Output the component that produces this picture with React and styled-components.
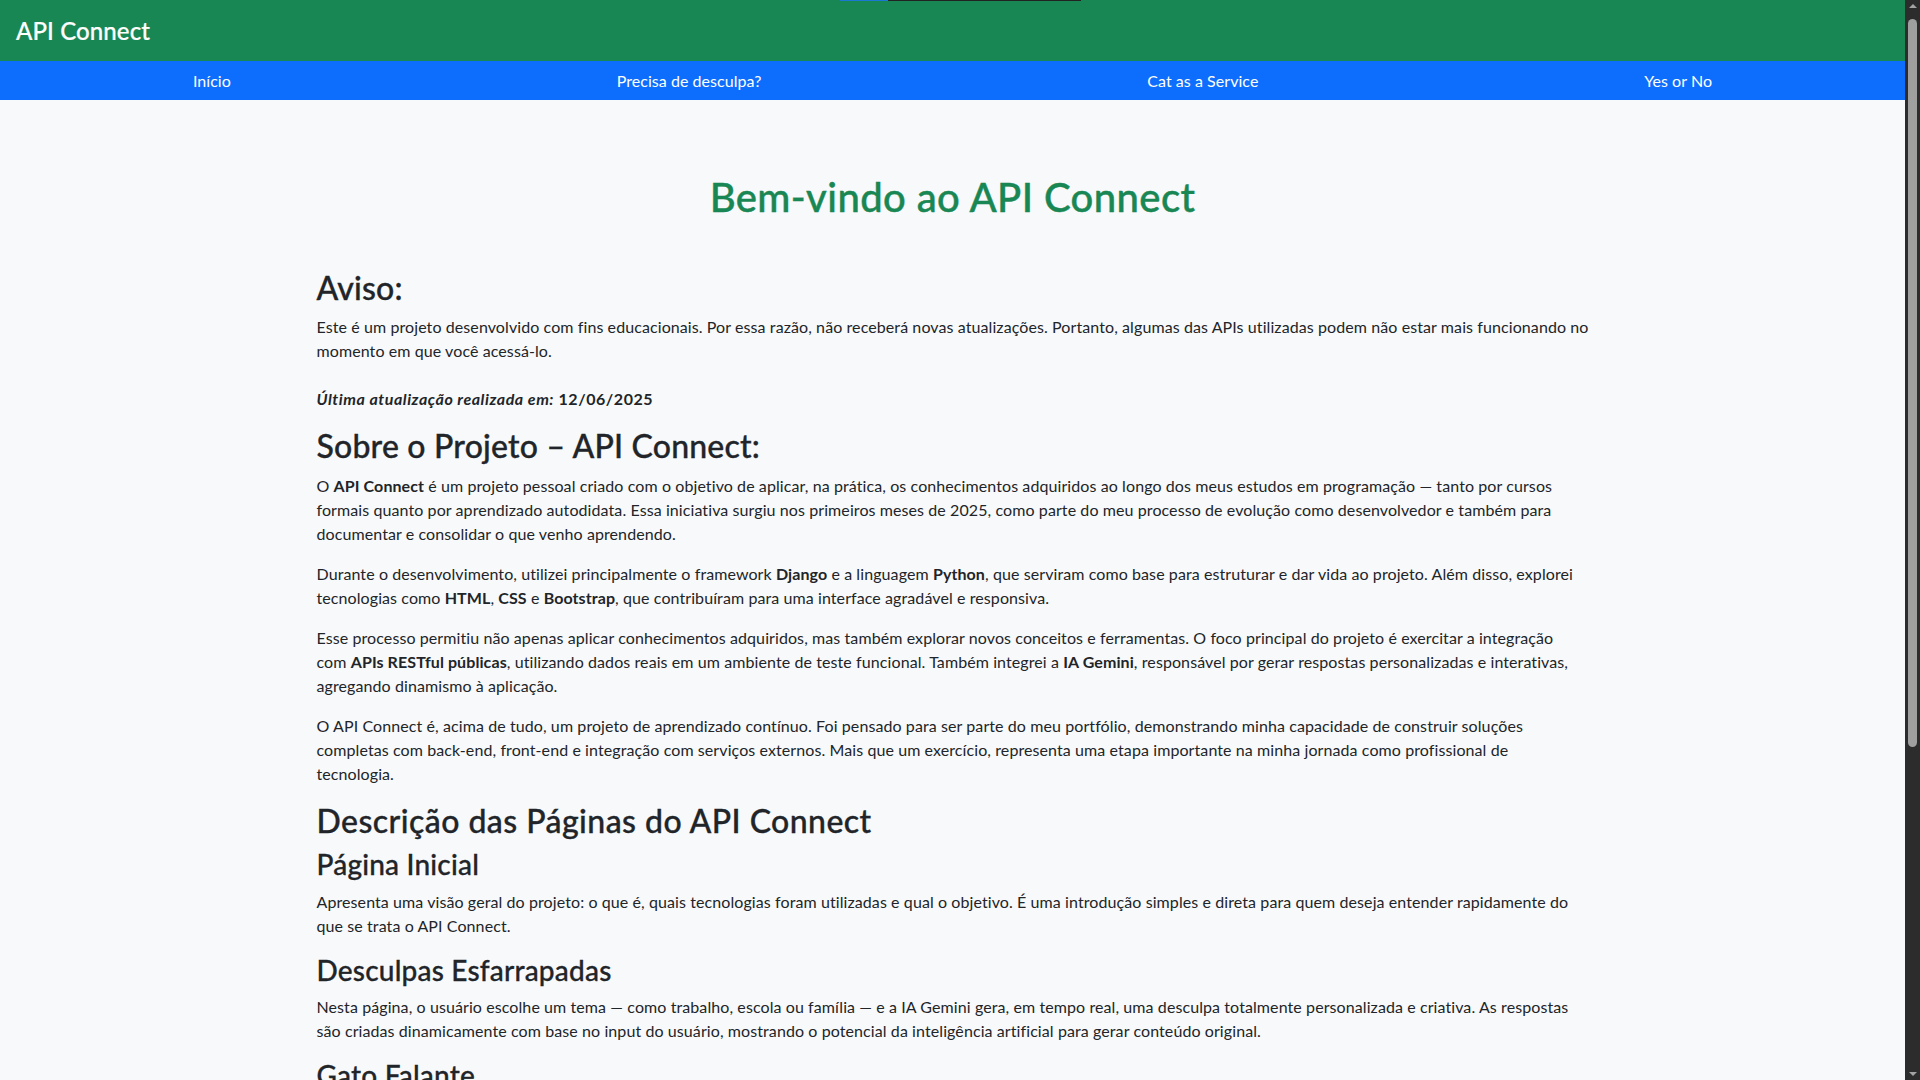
import React from "react";
import styled, { createGlobalStyle } from "styled-components";

const GlobalStyle = createGlobalStyle`
  *, *::before, *::after { box-sizing: border-box; }
  html, body { margin: 0; padding: 0; }
  body {
    font-family: Lato, "Noto Sans", "Liberation Sans", sans-serif;
    font-size: 16px;
    line-height: 1.5;
    color: #212529;
    background: #f8f9fa;
    overflow: hidden;
  }
`;

const Screen = styled.div`
  display: flex;
  height: 100vh;
  overflow: hidden;
`;

const Page = styled.div`
  flex: 1;
  min-width: 0;
  height: 100%;
  overflow: hidden;
  background: #f8f9fa;
`;

/* window scrollbar of the browser */
const ScrollBar = styled.aside`
  width: 15px;
  flex-shrink: 0;
  background: #2c2c2c;
  display: flex;
  flex-direction: column;
  align-items: center;
`;

const Arrow = styled.div`
  height: 17px;
  width: 15px;
  display: flex;
  align-items: ${(p) => (p.$down ? "flex-end" : "flex-start")};
  justify-content: center;
  padding: 4px 0;
  &::before {
    content: "";
    width: 0;
    height: 0;
    border-left: 4px solid transparent;
    border-right: 4px solid transparent;
    ${(p) =>
      p.$down
        ? "border-top: 4px solid #a3a3a3;"
        : "border-bottom: 4px solid #a3a3a3;"}
  }
`;

const Track = styled.div`
  flex: 1;
  width: 100%;
  padding-top: 2px;
  display: flex;
  justify-content: center;
`;

const Thumb = styled.div`
  width: 9px;
  height: 728px;
  border-radius: 5px;
  background: #9f9f9f;
`;

const TopBar = styled.header`
  position: relative;
  height: 61px;
  background: #198754;
  display: flex;
  align-items: center;
  padding: 0 16px;
`;

const LoadLine = styled.div`
  position: absolute;
  top: 0;
  left: 840px;
  width: 241px;
  height: 1px;
  background: linear-gradient(to right, #1a78d2 0 48px, #222 48px 100%);
`;

const Brand = styled.a`
  color: #fff;
  font-size: 24px;
  font-weight: 500;
  letter-spacing: 0.1px;
  text-decoration: none;
  line-height: 1;
  -webkit-text-stroke: 0.2px #fff;
`;

const NavBar = styled.nav`
  height: 39px;
  background: #0d6efd;
  display: flex;
  justify-content: space-around;
  align-items: center;
`;

const NavLink = styled.a`
  color: #fff;
  font-size: 16px;
  text-decoration: none;
  letter-spacing: 0.05px;
  line-height: 24px;
`;

const Main = styled.main`
  max-width: 1320px;
  margin: 0 auto;
  padding: 73px 24px 48px;
  letter-spacing: 0.09px;
`;

const Title = styled.h1`
  margin: 0 0 48px;
  text-align: center;
  color: #198754;
  font-size: 40px;
  font-weight: 500;
  line-height: 1.2;
  letter-spacing: 0.4px;
  -webkit-text-stroke: 0.45px #198754;
`;

const H2 = styled.h2`
  margin: 0 0 8px;
  font-size: 32px;
  font-weight: 500;
  line-height: 1.2;
  letter-spacing: ${(p) => p.$ls || "0.2px"};
  -webkit-text-stroke: 0.35px #212529;
`;

const H3 = styled.h3`
  margin: 0 0 8px;
  font-size: 28px;
  font-weight: 500;
  line-height: 1.2;
  letter-spacing: 0.2px;
  -webkit-text-stroke: 0.3px #212529;
`;

const P = styled.p`
  margin: 0 0 16px;
  padding-top: ${(p) => (p.$spaced ? "8px" : "0")};
`;

const B = styled.strong`
  font-weight: 700;
`;

const Updated = styled.strong`
  font-weight: 700;
  letter-spacing: 0.55px;
`;

const Em = styled.em`
  font-style: italic;
`;

const Footer = styled.footer`
  height: 115px;
  background: #198754;
  color: #fff;
  display: flex;
  align-items: center;
  justify-content: center;
`;

const navItems = ["Início", "Precisa de desculpa?", "Cat as a Service", "Yes or No"];

export default function App() {
  return (
    <>
      <GlobalStyle />
      <Screen>
        <Page>
          <TopBar>
            <LoadLine />
            <Brand href="#">API Connect</Brand>
          </TopBar>
          <NavBar>
            {navItems.map((n) => (
              <NavLink key={n} href="#">{n}</NavLink>
            ))}
          </NavBar>
          <Main>
            <Title>Bem-vindo ao API Connect</Title>

            <H2>Aviso:</H2>
            <P>
              Este é um projeto desenvolvido com fins educacionais. Por essa razão, não receberá novas atualizações. Portanto, algumas das APIs utilizadas podem não estar mais funcionando no momento em que você acessá-lo.
            </P>
            <P $spaced>
              <Updated><Em>Última atualização realizada em:</Em> 12/06/2025</Updated>
            </P>

            <H2>Sobre o Projeto – API Connect:</H2>
            <P>
              O <B>API Connect</B> é um projeto pessoal criado com o objetivo de aplicar, na prática, os conhecimentos adquiridos ao longo dos meus estudos em programação — tanto por cursos formais quanto por aprendizado autodidata. Essa iniciativa surgiu nos primeiros meses de 2025, como parte do meu processo de evolução como desenvolvedor e também para documentar e consolidar o que venho aprendendo.
            </P>
            <P>
              Durante o desenvolvimento, utilizei principalmente o framework <B>Django</B> e a linguagem <B>Python</B>, que serviram como base para estruturar e dar vida ao projeto. Além disso, explorei tecnologias como <B>HTML</B>, <B>CSS</B> e <B>Bootstrap</B>, que contribuíram para uma interface agradável e responsiva.
            </P>
            <P>
              Esse processo permitiu não apenas aplicar conhecimentos adquiridos, mas também explorar novos conceitos e ferramentas. O foco principal do projeto é exercitar a integração com{"\u00a0"}<B>APIs RESTful públicas</B>, utilizando dados reais em um ambiente de teste funcional. Também integrei a <B>IA Gemini</B>, responsável por gerar respostas personalizadas e interativas, agregando dinamismo à aplicação.
            </P>
            <P>
              O API Connect é, acima de tudo, um projeto de aprendizado contínuo. Foi pensado para ser parte do meu portfólio, demonstrando minha capacidade de construir soluções completas com back-end, front-end e integração com serviços externos. Mais que um exercício, representa uma etapa importante na minha jornada como profissional de tecnologia.
            </P>

            <H2 $ls="0.45px">Descrição das Páginas do API Connect</H2>
            <H3>Página Inicial</H3>
            <P>
              Apresenta uma visão geral do projeto: o que é, quais tecnologias foram utilizadas e qual o objetivo. É uma introdução simples e direta para quem deseja entender rapidamente do que se trata o API Connect.
            </P>
            <H3>Desculpas Esfarrapadas</H3>
            <P>
              Nesta página, o usuário escolhe um tema — como trabalho, escola ou família — e a IA Gemini gera, em tempo real, uma desculpa totalmente personalizada e criativa. As respostas são criadas dinamicamente com base no input do usuário, mostrando o potencial da inteligência artificial para gerar conteúdo original.
            </P>
            <H3>Gato Falante</H3>
            <P>
              Utilizando a API Cat as a Service, esta página exibe imagens aleatórias de gatos acompanhadas de frases geradas pela IA Gemini, criando uma experiência divertida e descontraída para o usuário.
            </P>
            <H3>Sim ou Não</H3>
            <P>
              Com a API Yes or No, o usuário faz uma pergunta e recebe uma resposta aleatória — sim, não ou talvez — acompanhada de um GIF animado correspondente.
            </P>
          </Main>
          <Footer>© 2025 API Connect</Footer>
        </Page>
        <ScrollBar>
          <Arrow />
          <Track>
            <Thumb />
          </Track>
          <Arrow $down />
        </ScrollBar>
      </Screen>
    </>
  );
}
